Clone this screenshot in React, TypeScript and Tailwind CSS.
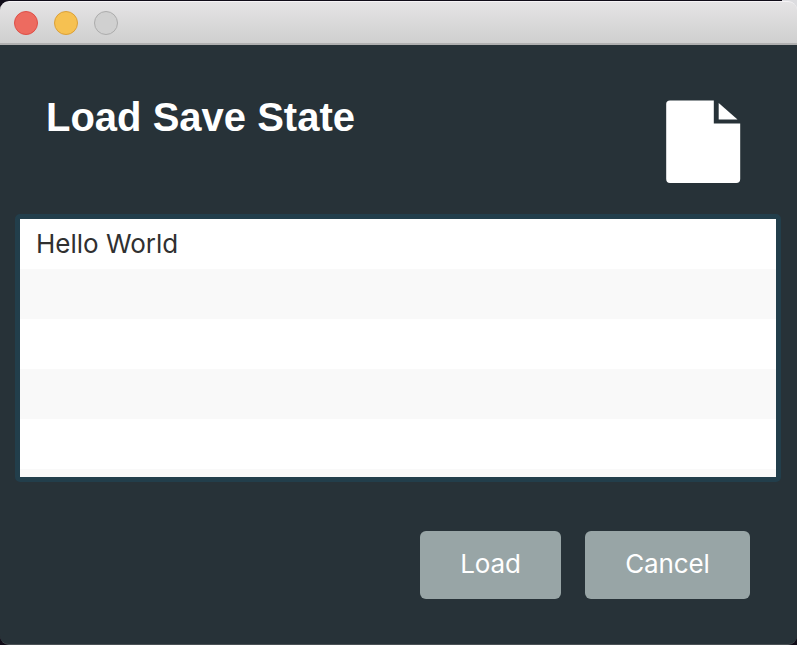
const rows = ["Hello World", "", "", "", "", ""];

function TitleBar() {
  return (
    <div className="shrink-0 border-r-[15px] border-[#dcdcdf] bg-[#100c18] pt-px">
      <header className="-mr-[15px] flex h-11 items-center gap-4 rounded-tl-[9px] rounded-tr-[9px] border-t border-[#f6f3f6] border-b-2 border-b-[#b0b0b0] bg-linear-to-b from-[#e5e4e5] to-[#cfcfcf] pl-3.5">
        <span className="size-6 rounded-full border border-[#de4f47] bg-[#ed6b60]" />
        <span className="size-6 rounded-full border border-[#dba038] bg-[#f6c151]" />
        <span className="size-6 rounded-full border border-[#acacac] bg-[#d0d0d0]" />
      </header>
    </div>
  );
}

function FileIcon() {
  return (
    <svg className="mt-[55px] h-[84px] w-[75px]" viewBox="0 0 75 84" fill="#fff">
      <path d="M4 .5H47.8V23.5H74.2V79Q74.2 83 70.2 83H4Q.2 83 .2 79V4Q.2 .5 4 .5Z" />
      <path d="M52.7 3L71.5 19.5H52.7Z" />
    </svg>
  );
}

function Button({ label, className }: { label: string; className: string }) {
  return (
    <button className={"flex h-[68px] items-center justify-center rounded-[6px] bg-[#98a5a6] pb-1 text-[26px] tracking-[-0.1px] text-white " + className}>
      {label}
    </button>
  );
}

export default function App() {
  return (
    <div className="h-[645px] w-[797px] overflow-hidden bg-[#100c18] font-['Inter',sans-serif]">
      <div className="flex h-[645px] flex-col overflow-hidden rounded-b-[9px] border-b border-[#4a5155] bg-[#273238]">
        <TitleBar />
        <div className="flex h-[169px] shrink-0 justify-between pr-14 pl-[46px]">
          <h1 className="mt-[48px] font-['Liberation_Sans',sans-serif] text-[40px] leading-[48px] font-bold whitespace-nowrap text-white">
            Load Save State
          </h1>
          <FileIcon />
        </div>
        <ul className="mr-4 ml-[15px] h-[268px] shrink-0 overflow-hidden rounded-[5px] border-5 border-[#223e4b] bg-white">
          {rows.map((row, i) => (
            <li key={i} className="h-[50px] pl-4 text-[26px] leading-[50px] text-[#303030] odd:bg-white even:bg-[#f9f9f9]">
              {row}
            </li>
          ))}
        </ul>
        <footer className="mt-[49px] flex justify-end gap-6 pr-[47px]">
          <Button label="Load" className="w-[141px]" />
          <Button label="Cancel" className="w-[165px]" />
        </footer>
      </div>
    </div>
  );
}
